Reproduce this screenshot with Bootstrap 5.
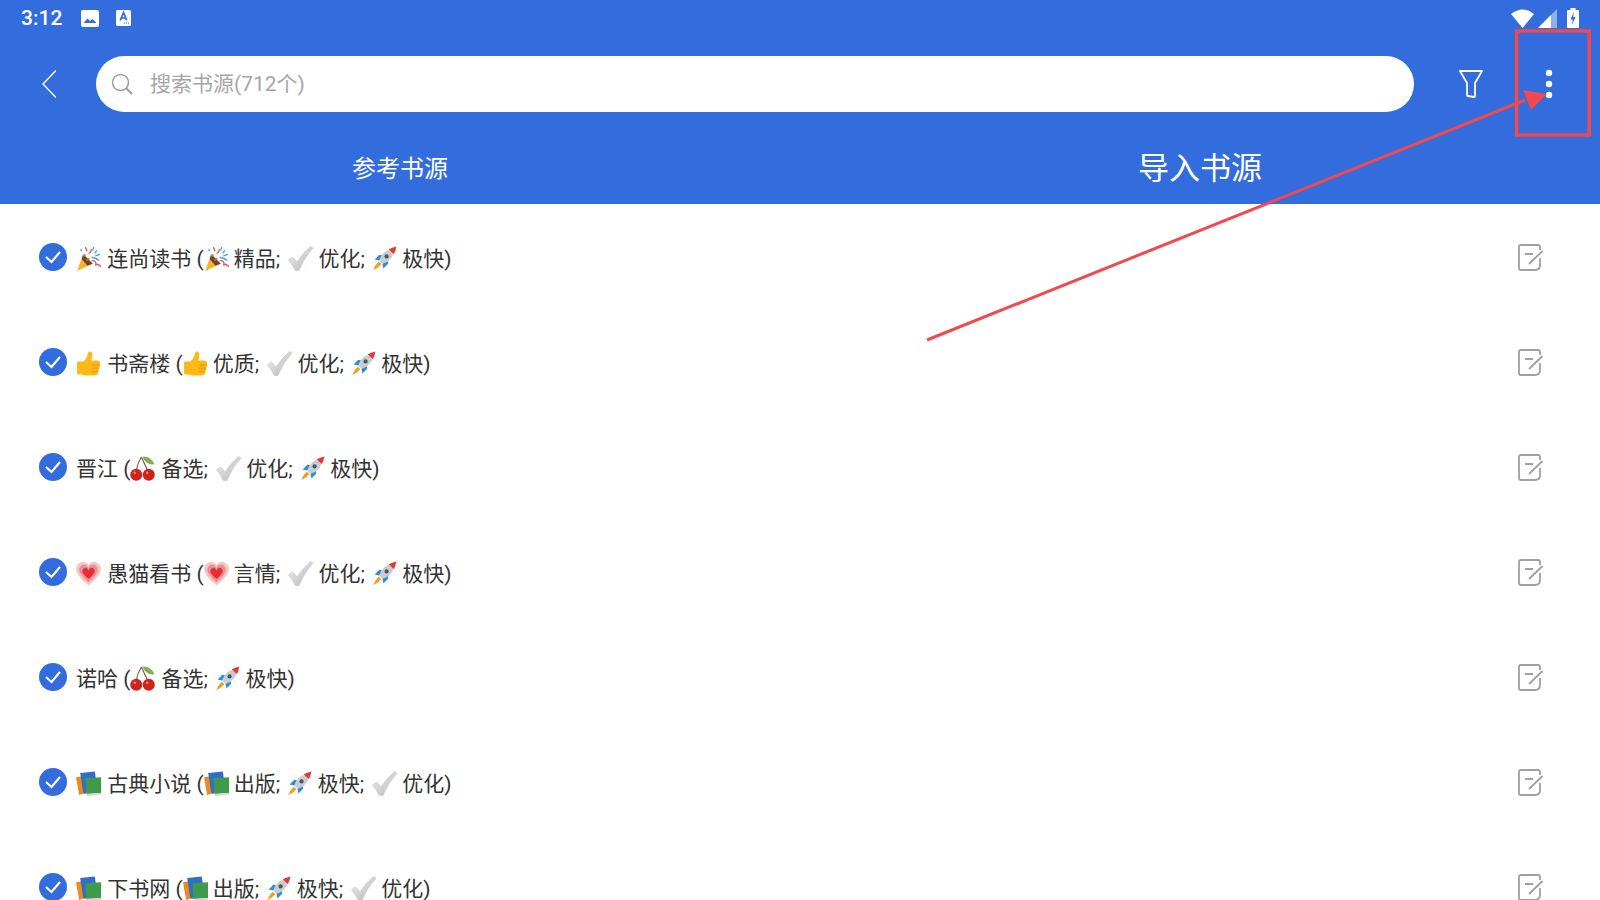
<!DOCTYPE html>
<html lang="zh-CN">
<head>
    <meta charset="UTF-8">
    <title>书源管理</title>
    <link href="https://cdn.jsdelivr.net/npm/bootstrap@5.3.3/dist/css/bootstrap.min.css" rel="stylesheet">
    <style>
        html, body { height: 900px; overflow: hidden; }
        body { font-family: Roboto, "Noto Sans CJK SC", sans-serif; color: #333; background: #fff; }
        .app-head { background: #336cdd; color: #fff; height: 204px; }
        .status-bar { height: 36px; padding: 0 21px 0 21px; }
        .status-time { font-size: 21px; font-weight: 500; line-height: 36px; margin-right: 19px; }
        .status-a { margin-left: 17px; }
        .status-wifi { margin-right: 4px; }
        .status-batt { margin-left: 10px; }
        .tool-bar { height: 96px; padding: 0 0 0 42px; }
        .search-pill { width: 1318px; height: 56px; margin-left: 40px; border-radius: 28px; padding-left: 15px; background: #fff; color: #a6a6a6; font-size: 21px; }
        .search-pill svg { margin-right: 17px; }
        .search-pill span { margin-top: 2px; }
        .tool-filter { margin-left: 45px; }
        .tool-more { margin-left: 62px; }
        .tab-row { height: 72px; padding-top: 1px; }
        .tab-item { width: 50%; text-align: center; font-size: 24px; line-height: 72px; }
        .tab-item.is-on { font-size: 31px; }
        .src-row { height: 105px; padding: 0 56px 0 39px; }
        .src-list { padding-top: 1px; }
        .src-tick { margin-top: -2px; }
        .src-text { font-size: 21px; line-height: 30px; margin-left: 9px; margin-top: 2px; color: #333; white-space: pre; }
        .src-text > .emo:first-child { margin-right: 1px; }
        .emo { width: 25px; height: 25px; vertical-align: -5px; }
        .emo-check { margin-left: 8px; }
        .emo-rocket { margin-left: 2px; }
        .mark-layer { position: absolute; left: 0; top: 0; pointer-events: none; }
    </style>
</head>

<body class="position-relative">
    <svg width="0" height="0" class="position-absolute">
        <defs>
            <linearGradient id="chk" x1="0" y1="0" x2="1" y2="1">
                <stop offset="0" stop-color="#f2f2f2"/>
                <stop offset="1" stop-color="#b4b4b4"/>
            </linearGradient>
        </defs>
        <symbol id="e-party" viewBox="0 0 24 24">
            <path d="M1 24 L7 8 L16 17 Z" fill="#f5b32e"/>
            <path d="M5.500 12.500 L7 8 L16 17 L11 19 Z" fill="#6e4327"/>
            <path d="M7 10 L9 8 M10 14 L13 12" stroke="#b5813f" stroke-width="1.500"/>
            <path d="M9 1 L10.500 5 M12 7 Q15 6 14.500 3" stroke="#e8574a" stroke-width="1.300" fill="none"/>
            <path d="M17 1 L16 4.500 M20 4 L18 7 M23 8 L18.500 9.500 M15 11 Q19 11 22 14" stroke="#4aa3e0" stroke-width="1.300" fill="none"/>
            <path d="M15 14 Q20 14 19 18 Q22 17 24 20" stroke="#e8574a" stroke-width="1.300" fill="none"/>
            <circle cx="5" cy="4" r="1" fill="#4aa3e0"/>
        </symbol>
        <symbol id="e-thumb" viewBox="0 0 24 24">
            <path d="M1 11 Q1 10 3 10 L7 10 Q10 8 11 4 Q11.500 0 14 .7 Q16.500 1.700 15.500 6 L14.500 9 L20.500 9 Q23.700 9.500 23 12.800 Q23.800 15 22.300 16 Q23 18.500 21.300 19.500 Q21.500 23 18.500 23.500 L9 23.500 Q7 23 6 22.500 L3 22.500 Q1 22.500 1 21 Z" fill="#fbb917"/>
            <path d="M15 13.500 H22 M15 16.500 H21.500 M15 19.800 H20.500" stroke="#de940c" stroke-width=".9" fill="none"/>
        </symbol>
        <symbol id="e-check" viewBox="0 0 24 24">
            <path d="M.5 13.500 L4 10.500 Q7 12.500 8.500 15.500 Q14 7 21.500 .5 L24 2 Q15 12 10.500 23.500 L7 23.500 Q4.500 18 .5 13.500 Z" fill="url(#chk)" stroke="#c4c4c4" stroke-width=".6"/>
        </symbol>
        <symbol id="e-rocket" viewBox="0 0 24 24">
            <path d="M7 14 L2.500 13 L7 8.500 L10 9 Z M10 17 L11 21.500 L15.500 17 L15 14 Z" fill="#2a8fd6"/>
            <path d="M7 14 Q9 7 15 4 L20 4 L20 9 Q17 15 10 17 Z" fill="#c9ccd1"/>
            <path d="M16 3 Q19 1.500 23.500 .5 Q22.500 5 21 8 Z" fill="#e53935"/>
            <circle cx="14" cy="10" r="2" fill="#4a5560"/>
            <path d="M6.500 15 L9 17.500 Q6 21 1 23 Q3 18 6.500 15 Z" fill="#f59a23"/>
        </symbol>
        <symbol id="e-cherry" viewBox="0 0 24 24">
            <path d="M11 1 Q7 7 6 14 M11 1 Q14 8 17 14" stroke="#7a5a3a" stroke-width="1.100" fill="none"/>
            <path d="M12 .5 Q20 0 23.500 8 Q15 9 12 .5 Z" fill="#7fae52"/>
            <circle cx="6" cy="18" r="5.800" fill="#d0211c"/>
            <circle cx="18" cy="18" r="5.800" fill="#d0211c"/>
            <circle cx="4.500" cy="16" r="1.200" fill="#f08a85"/>
            <circle cx="16.500" cy="16" r="1.200" fill="#f08a85"/>
        </symbol>
        <symbol id="e-heart" viewBox="0 0 24 24">
            <path d="M12 23.500 Q0 14 0 7.500 Q1 1 7 1 Q10.500 1 12 4 Q13.500 1 17 1 Q23 1 24 7.500 Q24 14 12 23.500 Z" fill="#f6c4c4"/>
            <path d="M12 20.500 Q3 13 3 8 Q4 3.500 7.500 3.500 Q10.500 3.500 12 6.800 Q13.500 3.500 16.500 3.500 Q20 3.500 21 8 Q21 13 12 20.500 Z" fill="#ee8d8f"/>
            <path d="M12 17 Q6 12.500 6 9 Q7 6.500 9 6.500 Q11 6.500 12 9 Q13 6.500 15 6.500 Q17 6.500 18 9 Q18 12.500 12 17 Z" fill="#de2f35"/>
        </symbol>
        <symbol id="e-books" viewBox="0 0 24 24">
            <path d="M0 6 L6 5 L9 21 L3 23 Z" fill="#ef8a1d"/>
            <path d="M4 2 L18 .5 L19 7 L9 22 L7 21 Z" fill="#2f6fc9"/>
            <path d="M9 7 L24 6 L24 21 L10 22 Z" fill="#3f9a4a"/>
            <path d="M10 22 L24 21 L24 23 L10 24 Z" fill="#d8d8d8"/>
        </symbol>
    </svg>

    <header class="app-head">
        <div class="status-bar d-flex align-items-center">
            <span class="status-time">3:12</span>
            <svg width="18" height="17" viewBox="0 0 18 17"><rect width="18" height="17" rx="2" fill="#fff"/><path d="M2.500 13 L6.500 8.500 L9 11 L11.500 9 L15.500 13 Z" fill="#336cdd"/></svg>
            <svg width="15" height="16" viewBox="0 0 15 16" class="status-a"><rect width="15" height="16" rx="1.500" fill="#fff"/><path d="M4.200 10.500 L7.500 2.500 L10.800 10.500 M5.500 8 H9.500" stroke="#336cdd" stroke-width="1.700" fill="none"/><path d="M8 13 H9 M10 13 H11 M12 13 H13" stroke="#336cdd" stroke-width="1"/></svg>
            <div class="ms-auto d-flex align-items-center">
                <svg width="23" height="19" viewBox="0 0 23 19" class="status-wifi"><path d="M0 5 Q11.500 -4 23 5 L11.500 19 Z" fill="#fff"/></svg>
                <svg width="19" height="19" viewBox="0 0 19 19"><path d="M0 19 L19 0 V19 Z" fill="#fff" fill-opacity=".45"/><path d="M0 19 L13 6 V19 Z" fill="#fff"/></svg>
                <svg width="12" height="20" viewBox="0 0 12 20" class="status-batt"><path d="M3.500 0 H8.500 V2 H11 Q12 2 12 3 V19 Q12 20 11 20 H1 Q0 20 0 19 V3 Q0 2 1 2 H3.500 Z" fill="#fff"/><path d="M7 4 L3.500 11.500 H5.800 L4.800 17 L8.600 9 H6.200 Z" fill="#336cdd"/></svg>
            </div>
        </div>
        <div class="tool-bar d-flex align-items-center">
            <svg width="14" height="28" viewBox="0 0 14 28"><path d="M14 .5 L1 14 L14 27.500" stroke="#fff" stroke-width="1.500" fill="none"/></svg>
            <div class="search-pill d-flex align-items-center">
                <svg width="22" height="22" viewBox="0 0 22 22"><circle cx="9.500" cy="9.500" r="8" stroke="#9c9c9c" stroke-width="1.500" fill="none"/><path d="M15 15 L21 21" stroke="#9c9c9c" stroke-width="2"/></svg>
                <span>搜索书源(712个)</span>
            </div>
            <svg width="24" height="28" viewBox="0 0 24 28" class="tool-filter"><path d="M1 1 H23 L16 13 V26 Q16 27 15 27 L9 26 Q8 26 8 25 V13 Z" stroke="#fff" stroke-width="1.800" fill="none" stroke-linejoin="round"/></svg>
            <svg width="8" height="30" viewBox="0 0 8 30" class="tool-more"><circle cx="4" cy="4" r="3.200" fill="#fff"/><circle cx="4" cy="15" r="3.200" fill="#fff"/><circle cx="4" cy="26" r="3.200" fill="#fff"/></svg>
        </div>
        <div class="tab-row d-flex">
            <div class="tab-item">参考书源</div>
            <div class="tab-item is-on">导入书源</div>
        </div>
    </header>

    <main class="src-list" id="srcList"></main>

    <svg class="mark-layer" width="1600" height="900" viewBox="0 0 1600 900">
        <rect x="1516.700" y="31" width="72.500" height="104" fill="none" stroke="#f2484f" stroke-width="3.500"/>
        <path d="M927 340 L1525 100" stroke="#f2484f" stroke-width="3"/>
        <path d="M1547 94 L1523 90 L1531 110 Z" fill="#f2484f"/>
    </svg>

    <script type="text/javascript">
        // a string is text, a one-item array is an emoji drawn from the symbols above
        const rows = [
            [['party'], ' 连尚读书 (', ['party'], ' 精品;', ['check'], ' 优化; ', ['rocket'], ' 极快)'],
            [['thumb'], ' 书斋楼 (', ['thumb'], ' 优质;', ['check'], ' 优化; ', ['rocket'], ' 极快)'],
            ['晋江 (', ['cherry'], ' 备选;', ['check'], ' 优化; ', ['rocket'], ' 极快)'],
            [['heart'], ' 愚猫看书 (', ['heart'], ' 言情;', ['check'], ' 优化; ', ['rocket'], ' 极快)'],
            ['诺哈 (', ['cherry'], ' 备选; ', ['rocket'], ' 极快)'],
            [['books'], ' 古典小说 (', ['books'], ' 出版; ', ['rocket'], ' 极快;', ['check'], ' 优化)'],
            [['books'], ' 下书网 (', ['books'], ' 出版; ', ['rocket'], ' 极快;', ['check'], ' 优化)']
        ];

        document.getElementById('srcList').innerHTML = rows.map(parts => {
            const text = parts.map(p => typeof p === 'string'
                ? p
                : `<svg class="emo emo-${p[0]}"><use href="#e-${p[0]}"/></svg>`).join('');
            return `<div class="src-row d-flex align-items-center">
                <svg class="src-tick" width="28" height="28" viewBox="0 0 28 28"><circle cx="14" cy="14" r="14" fill="#336cdd"/><path d="M7 14 L12.500 19 L21 9" stroke="#fff" stroke-width="2.200" fill="none"/></svg>
                <span class="src-text">${text}</span>
                <svg class="ms-auto" width="26" height="28" viewBox="0 0 26 28"><path d="M22 6 V3 Q22 1 20 1 H3 Q1 1 1 3 V24 Q1 26 3 26 H17 Q22 26 22 21 V14" stroke="#a0a0a0" stroke-width="1.800" fill="none"/><path d="M7 10 H15 M11 20 L24.500 7" stroke="#a0a0a0" stroke-width="1.800" fill="none"/></svg>
            </div>`;
        }).join('');
    </script>
    <script src="https://cdn.jsdelivr.net/npm/bootstrap@5.3.3/dist/js/bootstrap.bundle.min.js"></script>
</body>

</html>
